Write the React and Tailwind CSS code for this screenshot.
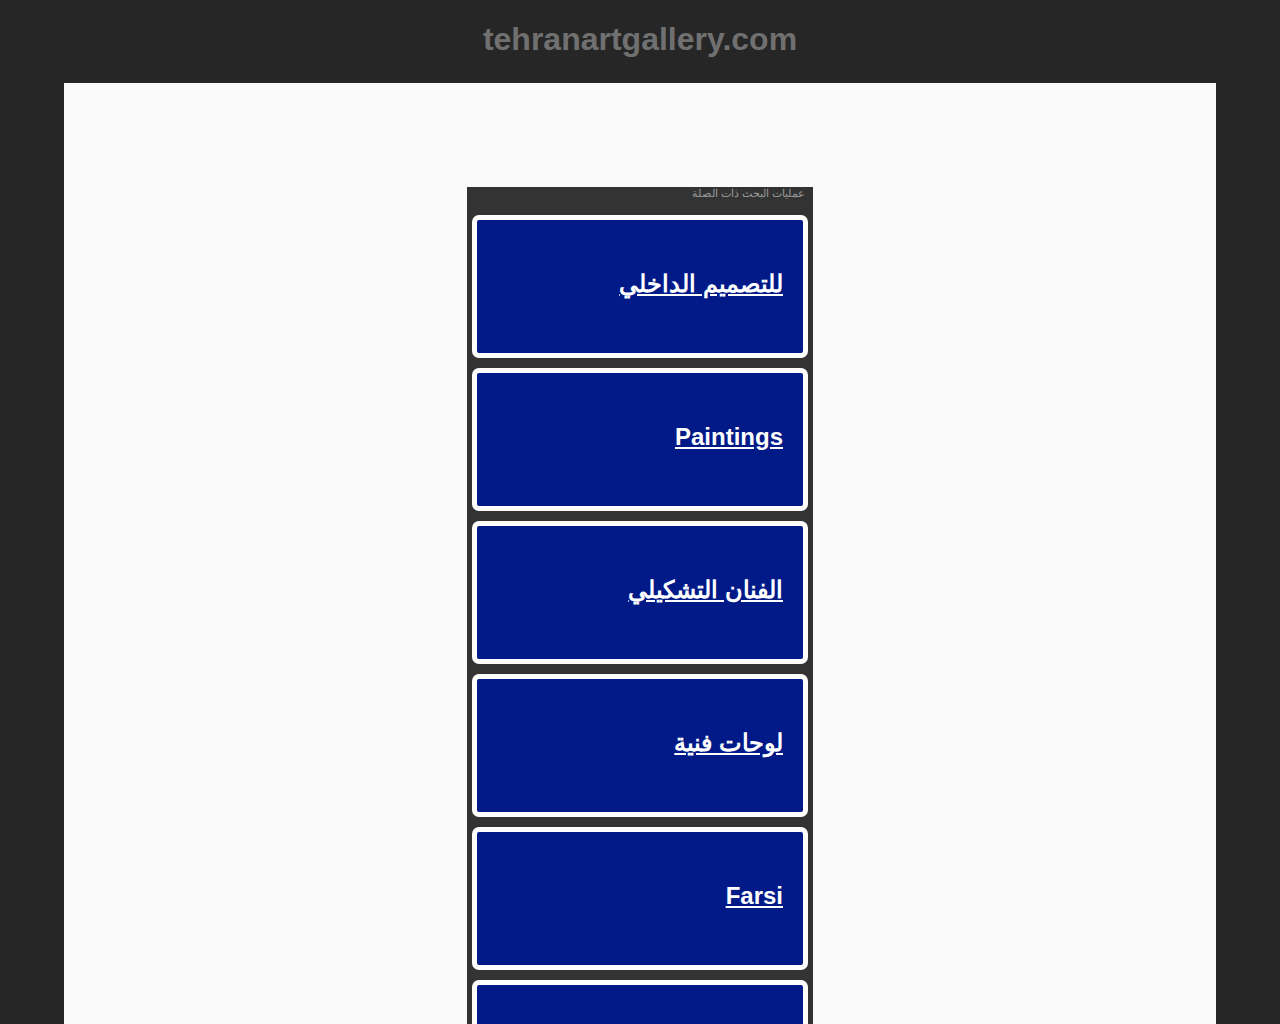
const links = [
  'للتصميم الداخلي',
  'Paintings',
  'الفنان التشكيلي',
  'لوحات فنية',
  'Farsi',
  'معارض فنية',
]

function LinkCard({ label }) {
  return (
    <div className="h-[143px] rounded-[7px] border-[5px] border-white bg-[#011a87] flex items-center justify-end pr-5 pb-[6px]">
      <a href="#" dir="auto" className="text-[24px] font-bold text-white underline leading-none">
        {label}
      </a>
    </div>
  )
}

export default function App() {
  return (
    <div className="min-h-screen bg-[#262626] font-['Liberation_Sans',sans-serif]">
      <header className="h-[83px] flex items-center justify-center pb-[6px]">
        <h1 className="text-[32px] font-bold text-[#707070]">tehranartgallery.com</h1>
      </header>
      <main className="mx-16 bg-[#fafafa] pt-[104px] min-h-[941px] flex justify-center">
        <div className="w-[346px] bg-[#333333] px-[5px] pb-4">
          <div dir="rtl" className="h-[28px] pr-[3px] text-[11px] leading-[13px] text-[#9a9a9a]">
            عمليات البحث ذات الصلة
          </div>
          <div className="flex flex-col gap-[10px]">
            {links.map((l) => (
              <LinkCard key={l} label={l} />
            ))}
          </div>
        </div>
      </main>
    </div>
  )
}
